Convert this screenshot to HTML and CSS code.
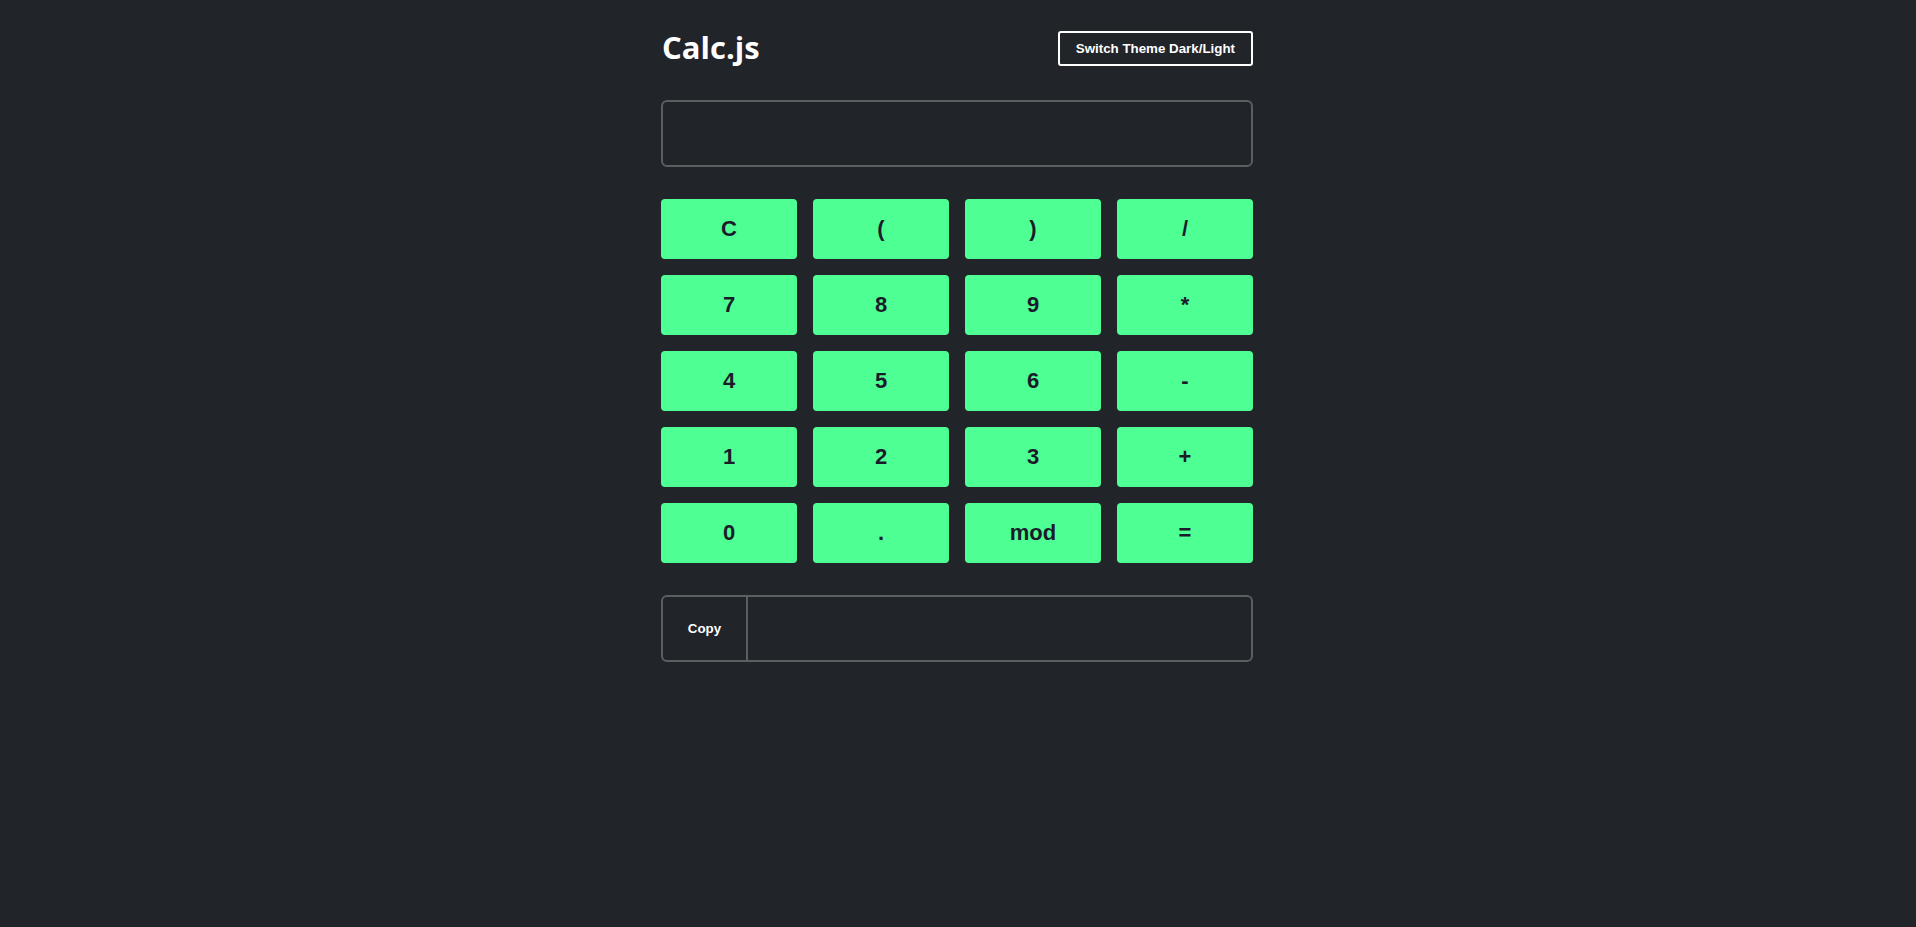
FILE: index.html
```html
<!DOCTYPE html>
<html lang="en">
<head>
<meta charset="utf-8">
<title>Calc.js</title>
<link rel="stylesheet" href="styles.css">
</head>
<body>
<main class="app">
  <header class="header">
    <h1 class="title">Calc.js</h1>
    <button class="theme-btn">Switch Theme Dark/Light</button>
  </header>
  <div class="display"></div>
  <div class="keys">
    <button class="key">C</button>
    <button class="key">(</button>
    <button class="key">)</button>
    <button class="key">/</button>
    <button class="key">7</button>
    <button class="key">8</button>
    <button class="key">9</button>
    <button class="key">*</button>
    <button class="key">4</button>
    <button class="key">5</button>
    <button class="key">6</button>
    <button class="key">-</button>
    <button class="key">1</button>
    <button class="key">2</button>
    <button class="key">3</button>
    <button class="key">+</button>
    <button class="key">0</button>
    <button class="key">.</button>
    <button class="key">mod</button>
    <button class="key">=</button>
  </div>
  <div class="copy-box">
    <button class="copy-btn">Copy</button>
    <div class="copy-out"></div>
  </div>
</main>
</body>
</html>
```

FILE: styles.css
```css
html, body {
  margin: 0;
  padding: 0;
  background: #212429;
  height: 100%;
}
body {
  font-family: "Liberation Sans", Arial, sans-serif;
  color: #ffffff;
}
.app {
  width: 592px;
  margin: 0 auto;
  padding-top: 31px;
  box-sizing: content-box;
  position: relative;
  left: -1px;
}
.header {
  display: flex;
  justify-content: space-between;
  align-items: center;
  height: 35px;
}
.title {
  margin: 0 0 3px 1px;
  font-family: "Open Sans", sans-serif;
  font-weight: 700;
  font-size: 31px;
  line-height: 40px;
  color: #ffffff;
}
.theme-btn {
  font-family: "Liberation Sans", Arial, sans-serif;
  font-weight: 700;
  font-size: 13.333px;
  color: #ffffff;
  background: #212429;
  border: 2px solid #ffffff;
  border-radius: 3px;
  padding: 0 16px;
  height: 35px;
  line-height: 15px;
}
.display {
  margin-top: 34px;
  height: 63px;
  border: 2px solid #5c5e62;
  border-radius: 6px;
}
.keys {
  margin-top: 32px;
  display: grid;
  grid-template-columns: repeat(4, 1fr);
  grid-auto-rows: 60px;
  gap: 16px;
}
.key {
  background: #4eff93;
  border: none;
  border-radius: 4px;
  font-family: "Liberation Sans", Arial, sans-serif;
  font-weight: 700;
  font-size: 22px;
  color: #1c1b2b;
  padding: 0;
}
.copy-box {
  margin-top: 32px;
  height: 63px;
  border: 2px solid #5c5e62;
  border-radius: 6px;
  display: flex;
}
.copy-btn {
  width: 83px;
  background: transparent;
  border: none;
  border-right: 2px solid #5c5e62;
  box-sizing: content-box;
  padding: 0;
  font-family: "Liberation Sans", Arial, sans-serif;
  font-weight: 700;
  font-size: 13.333px;
  color: #ffffff;
}
.copy-out {
  flex: 1;
}
```
